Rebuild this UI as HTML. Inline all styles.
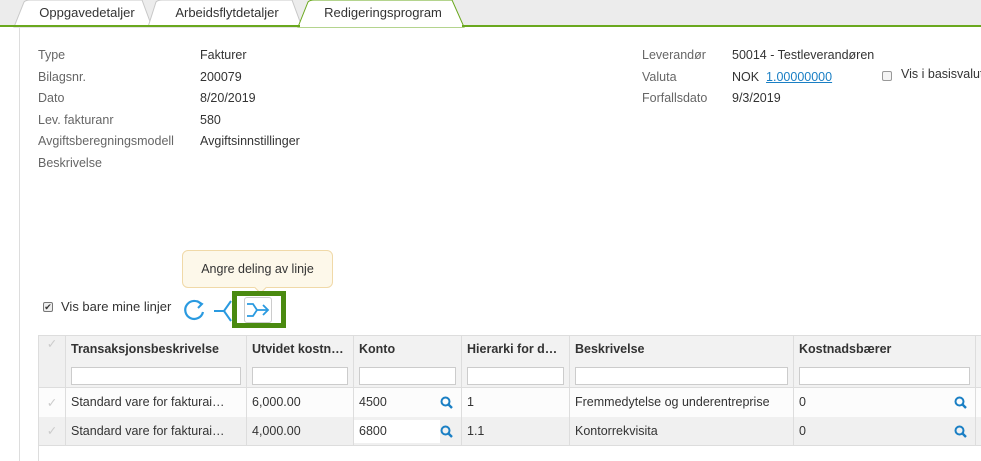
<!DOCTYPE html>
<html><head><meta charset="utf-8"><style>
*{box-sizing:border-box;margin:0;padding:0}
body{width:981px;height:461px;overflow:hidden;background:#fff;font-family:"Liberation Sans",sans-serif;font-size:12.5px;color:#333;position:relative}
.abs{position:absolute;white-space:nowrap}
.tabbar{position:absolute;left:0;top:0;width:981px;height:27px;background:#ececec}
.tab{position:absolute;top:0;height:26px;line-height:26px;font-size:13px;color:#333;text-align:center}
.lbl{color:#666}
table{position:absolute;left:38px;top:335px;border-collapse:collapse;font-size:12.5px;table-layout:fixed;width:950px}
th{background:#f2f2f2;border:1px solid #ddd;text-align:left;font-weight:bold;height:52px;vertical-align:top;padding:6px 5px 0;color:#333;white-space:nowrap;overflow:hidden}
th input{display:block;margin-top:11px;height:18px;border:1px solid #ccc;width:100%;background:#fff}
td{border-left:1px solid #ddd;border-right:1px solid #ddd;height:29px;padding:0 5px;white-space:nowrap;color:#333;position:relative;overflow:hidden}
tr.r1 td{background:#fcfcfc}
tr.r2 td{background:#f0f0f0;border-bottom:1px solid #ddd}
td.ck,th.ck{background:#f0f0f0;color:#ccc;text-align:center;padding:0;font-weight:normal}
.q{position:absolute;right:8px;top:8px}
</style></head><body>
<div class="tabbar"></div>
<svg class="abs" style="left:0;top:0" width="470" height="28">
<path d="M14 27 L24 2 Q26 0 30 0 L142 0 L152 27 Z" fill="#fff" stroke="#c8c8c8"/>
<path d="M148 27 L156 2 Q158 0 162 0 L292 0 L302 27 Z" fill="#fff" stroke="#c8c8c8"/>
<path d="M298 27 L308 2 Q310 0 314 0 L452 0 L464 27 Z" fill="#fff" stroke="#6aa81e"/>
</svg>
<div class="abs" style="left:0;top:25px;width:981px;height:2px;background:#6aa81e"></div>
<div class="abs" style="left:300px;top:25px;width:162px;height:2px;background:#fff"></div>
<div class="tab" style="left:30px;width:114px">Oppgavedetaljer</div>
<div class="tab" style="left:160px;width:134px">Arbeidsflytdetaljer</div>
<div class="tab" style="left:312px;width:142px">Redigeringsprogram</div>
<div class="abs" style="left:19px;top:28px;width:1px;height:433px;background:#ddd"></div>

<div class="abs lbl" style="left:38px;top:45px;line-height:21.5px">Type<br>Bilagsnr.<br>Dato<br>Lev. fakturanr<br>Avgiftsberegningsmodell<br>Beskrivelse</div>
<div class="abs" style="left:200px;top:45px;line-height:21.5px">Fakturer<br>200079<br>8/20/2019<br>580<br>Avgiftsinnstillinger</div>
<div class="abs lbl" style="left:642px;top:45px;line-height:21.5px">Leverandør<br>Valuta<br>Forfallsdato</div>
<div class="abs" style="left:732px;top:45px;line-height:21.5px">50014 - Testleverandøren<br>NOK &nbsp;<span style="color:#1a7fc4;text-decoration:underline">1.00000000</span><br>9/3/2019</div>
<div class="abs" style="left:882px;top:71px;width:10px;height:10px;border:1px solid #999;border-radius:2px;background:#f4f4f4"></div>
<div class="abs" style="left:901px;top:67px">Vis i basisvaluta</div>

<div class="abs" style="left:182px;top:250px;width:151px;height:38px;background:#fdf8ea;border:1px solid #f0d9a8;border-radius:6px;text-align:center;line-height:36px;font-size:12.5px">Angre deling av linje</div>
<div class="abs" style="left:256px;top:283px;width:9px;height:9px;background:#fdf8ea;border-right:1px solid #f0d9a8;border-bottom:1px solid #f0d9a8;transform:rotate(45deg)"></div>

<div class="abs" style="left:43px;top:302px;width:10px;height:10px;border:1px solid #777;border-radius:2px;background:#eee;font-size:9px;line-height:8px;text-align:center">✔</div>
<div class="abs" style="left:61px;top:299px;font-size:13px">Vis bare mine linjer</div>
<svg class="abs" style="left:182px;top:298px" width="26" height="24"><path d="M19 6 A9 9 0 1 0 21 14" fill="none" stroke="#2a9ae0" stroke-width="2.2"/><path d="M15 3 L20 6 L16 10" fill="none" stroke="#2a9ae0" stroke-width="2"/></svg>
<svg class="abs" style="left:212px;top:296px" width="22" height="30"><path d="M2 15 H12 L19 5 M12 15 L19 25" fill="none" stroke="#2a9ae0" stroke-width="2"/></svg>
<div class="abs" style="left:232px;top:291px;width:54px;height:37px;border:5px solid #4a8a10"></div>
<div class="abs" style="left:244px;top:297px;width:28px;height:26px;border:1px solid #ccc;border-radius:3px;background:#fff"></div>
<svg class="abs" style="left:245px;top:300px" width="26" height="20"><path d="M2 4 L8 4 L12 10 L8 16 L2 16 M12 10 H23 M18 5 L23 10 L18 15" fill="none" stroke="#2a9ae0" stroke-width="1.8"/></svg>

<table>
<colgroup><col style="width:27px"><col style="width:181px"><col style="width:107px"><col style="width:108px"><col style="width:108px"><col style="width:224px"><col style="width:182px"><col style="width:13px"></colgroup>
<tr><th class="ck">✓</th><th>Transaksjonsbeskrivelse<input></th><th>Utvidet kostn…<input></th><th>Konto<input></th><th>Hierarki for d…<input></th><th>Beskrivelse<input></th><th>Kostnadsbærer<input></th><th></th></tr>
<tr class="r1"><td class="ck">✓</td><td>Standard vare for fakturai…</td><td>6,000.00</td><td>4500<svg class="q" width="13" height="13"><circle cx="5.5" cy="5.5" r="4" fill="none" stroke="#1a7fc4" stroke-width="2"/><path d="M8.5 8.5 L12 12" stroke="#1a7fc4" stroke-width="2.4"/></svg></td><td>1</td><td>Fremmedytelse og underentreprise</td><td>0<svg class="q" width="13" height="13"><circle cx="5.5" cy="5.5" r="4" fill="none" stroke="#1a7fc4" stroke-width="2"/><path d="M8.5 8.5 L12 12" stroke="#1a7fc4" stroke-width="2.4"/></svg></td><td></td></tr>
<tr class="r2"><td class="ck">✓</td><td>Standard vare for fakturai…</td><td>4,000.00</td><td><div style="position:absolute;left:0;top:3px;width:86px;height:23px;background:#fff"></div><span style="position:relative">6800</span><svg class="q" width="13" height="13"><circle cx="5.5" cy="5.5" r="4" fill="none" stroke="#1a7fc4" stroke-width="2"/><path d="M8.5 8.5 L12 12" stroke="#1a7fc4" stroke-width="2.4"/></svg></td><td>1.1</td><td>Kontorrekvisita</td><td>0<svg class="q" width="13" height="13"><circle cx="5.5" cy="5.5" r="4" fill="none" stroke="#1a7fc4" stroke-width="2"/><path d="M8.5 8.5 L12 12" stroke="#1a7fc4" stroke-width="2.4"/></svg></td><td></td></tr>
</table>
<div class="abs" style="left:38px;top:445px;width:1px;height:16px;background:#ddd"></div>
</body></html>
